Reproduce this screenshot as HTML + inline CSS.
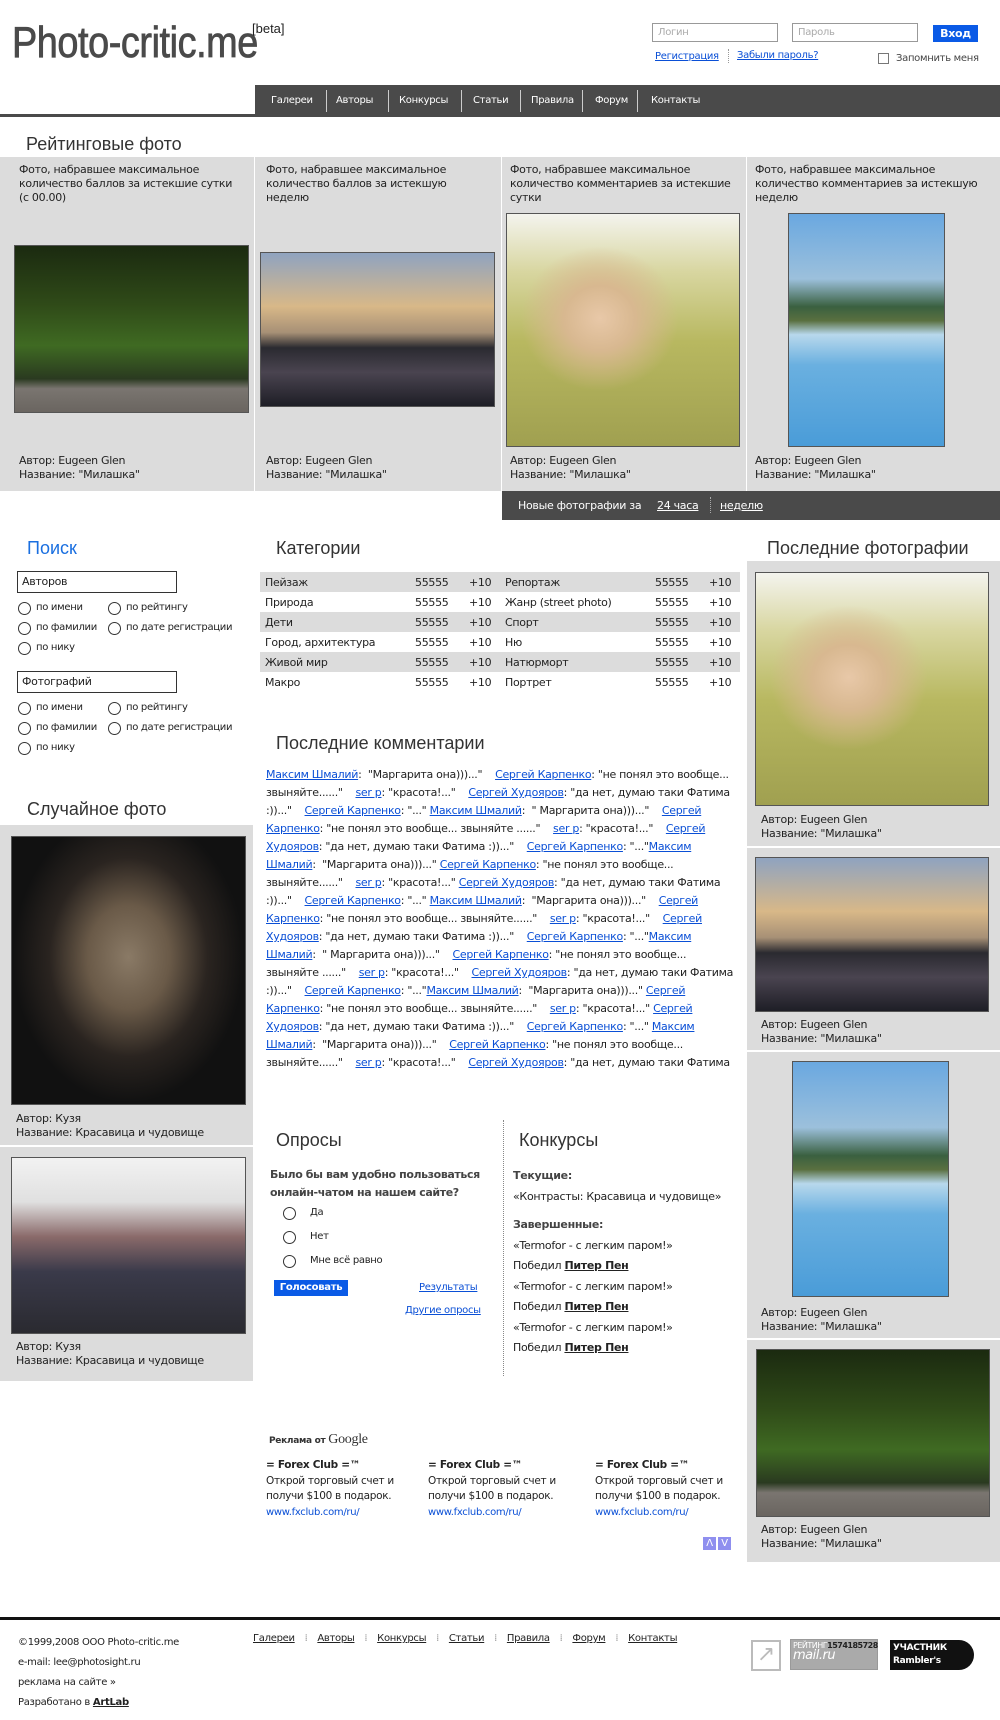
<!DOCTYPE html>
<html><head><meta charset="utf-8">
<style>
*{margin:0;padding:0;box-sizing:border-box}
body{width:1000px;height:1720px;position:relative;background:#fff;font-family:"DejaVu Sans","Liberation Sans",sans-serif;font-size:11px;letter-spacing:-0.3px;color:#222;overflow:hidden}
.a{position:absolute;white-space:nowrap}
a{color:#0a4fd6;text-decoration:underline}
.h{font-size:18px;color:#333;letter-spacing:0;font-family:"Liberation Sans",sans-serif}
.g{background:#dcdcdc}
.img{position:absolute;border:1px solid #555}
.nav span{position:absolute;top:0;color:#fff}
.sep{position:absolute;width:1px;background:#ddd}
.rad{position:absolute;width:13px;height:13px;border:1px solid #333;border-radius:50%;background:#fff}
.cat{position:absolute;left:260px;width:480px;height:20px}
.cat span{position:absolute;top:4px}
.cm{position:absolute;left:266px;top:766px;width:468px;height:306px;overflow:hidden;line-height:18px;font-size:11px;white-space:normal;letter-spacing:-0.3px}
.sm{font-size:10px}
</style></head><body>

<!-- header -->
<div class="a" style="left:12px;top:18px;font-size:44px;color:#4a4a4a;transform:scaleX(0.86);transform-origin:0 0;letter-spacing:-0.5px;font-family:'Liberation Sans',sans-serif;-webkit-text-stroke:0.8px #4a4a4a">Photo-critic.me</div>
<div class="a" style="left:252px;top:21px;font-size:13px;color:#222;font-family:'Liberation Sans',sans-serif;letter-spacing:0">[beta]</div>

<div class="a sm" style="left:652px;top:23px;width:126px;height:19px;border:1px solid #999;color:#aaa;padding:3px 5px">Логин</div>
<div class="a sm" style="left:792px;top:23px;width:126px;height:19px;border:1px solid #999;color:#aaa;padding:3px 5px">Пароль</div>
<div class="a" style="left:933px;top:25px;width:45px;height:17px;background:#0a5ae6;color:#fff;font-weight:bold;text-align:center;line-height:17px">Вход</div>
<a class="a sm" style="left:655px;top:51px">Регистрация</a>
<div class="a" style="left:728px;top:49px;height:14px;border-left:1px dotted #999"></div>
<a class="a sm" style="left:737px;top:50px">Забыли пароль?</a>
<div class="a" style="left:878px;top:53px;width:11px;height:11px;border:1px solid #777"></div>
<div class="a sm" style="left:896px;top:53px;color:#444">Запомнить меня</div>

<div class="a" style="left:0;top:114px;width:1000px;height:3px;background:#4a4a4a"></div>
<div class="a nav sm" style="left:255px;top:85px;width:745px;height:32px;background:#4a4a4a">
 <span style="left:16px;top:10px">Галереи</span>
 <div class="sep" style="left:71px;top:5px;height:22px;background:#ccc"></div>
 <span style="left:81px;top:10px">Авторы</span>
 <div class="sep" style="left:133px;top:5px;height:22px;background:#ccc"></div>
 <span style="left:144px;top:10px">Конкурсы</span>
 <div class="sep" style="left:206px;top:5px;height:22px;background:#ccc"></div>
 <span style="left:218px;top:10px">Статьи</span>
 <div class="sep" style="left:265px;top:5px;height:22px;background:#ccc"></div>
 <span style="left:276px;top:10px">Правила</span>
 <div class="sep" style="left:327px;top:5px;height:22px;background:#ccc"></div>
 <span style="left:340px;top:10px">Форум</span>
 <div class="sep" style="left:382px;top:5px;height:22px;background:#ccc"></div>
 <span style="left:396px;top:10px">Контакты</span>
</div>

<div class="a h" style="left:26px;top:134px">Рейтинговые фото</div>

<!-- rating panel -->
<div class="a g" style="left:0;top:157px;width:254px;height:334px"></div>
<div class="a g" style="left:255px;top:157px;width:246px;height:334px"></div>
<div class="a g" style="left:502px;top:157px;width:244px;height:334px"></div>
<div class="a g" style="left:747px;top:157px;width:253px;height:334px"></div>

<div class="a" style="left:19px;top:163px;line-height:14px">Фото, набравшее максимальное<br>количество баллов за истекшие сутки<br>(с 00.00)</div>
<div class="a" style="left:266px;top:163px;line-height:14px">Фото, набравшее максимальное<br>количество баллов за истекшую<br>неделю</div>
<div class="a" style="left:510px;top:163px;line-height:14px">Фото, набравшее максимальное<br>количество комментариев за истекшие<br>сутки</div>
<div class="a" style="left:755px;top:163px;line-height:14px">Фото, набравшее максимальное<br>количество комментариев за истекшую<br>неделю</div>

<div class="img" style="left:14px;top:245px;width:235px;height:168px;background:linear-gradient(180deg,#1b2a10 0%,#2f4a18 35%,#3f6a22 60%,#2a3a20 80%,#7a7570 86%,#6a6560 100%)"></div>
<div class="img" style="left:260px;top:252px;width:235px;height:155px;background:linear-gradient(180deg,#8fa3c0 0%,#d8b888 35%,#a79076 52%,#2a2a30 62%,#4a4450 78%,#1e1e26 100%)"></div>
<div class="img" style="left:506px;top:213px;width:234px;height:234px;background:radial-gradient(ellipse at 40% 45%,#e8c8a8 0%,#d8b890 18%,rgba(200,190,120,0) 40%),linear-gradient(180deg,#f4f4ee 0%,#d8d6a0 25%,#b8b860 55%,#a0a050 100%)"></div>
<div class="img" style="left:788px;top:213px;width:157px;height:234px;background:linear-gradient(180deg,#6aa8e0 0%,#9cc0dc 28%,#3a6040 40%,#5a7040 46%,#b8d8ec 52%,#6ab0e0 65%,#4a9cd8 100%)"></div>

<div class="a" style="left:19px;top:454px;line-height:14px">Автор: Eugeen Glen<br>Название: "Милашка"</div>
<div class="a" style="left:266px;top:454px;line-height:14px">Автор: Eugeen Glen<br>Название: "Милашка"</div>
<div class="a" style="left:510px;top:454px;line-height:14px">Автор: Eugeen Glen<br>Название: "Милашка"</div>
<div class="a" style="left:755px;top:454px;line-height:14px">Автор: Eugeen Glen<br>Название: "Милашка"</div>

<div class="a" style="left:502px;top:491px;width:498px;height:29px;background:#4a4a4a;color:#fff">
 <span class="a" style="left:16px;top:8px">Новые фотографии за</span>
 <a class="a" style="left:155px;top:8px;color:#fff">24 часа</a>
 <div class="a" style="left:208px;top:6px;height:16px;border-left:1px dotted #aaa"></div>
 <a class="a" style="left:218px;top:8px;color:#fff">неделю</a>
</div>

<!-- search -->
<div class="a h" style="left:27px;top:538px;color:#1a6fe0">Поиск</div>
<div class="a" style="left:17px;top:571px;width:160px;height:22px;border:1px solid #333;padding:3px 4px">Авторов</div>
<div class="rad" style="left:18px;top:602px"></div><div class="a sm" style="left:36px;top:602px">по имени</div>
<div class="rad" style="left:108px;top:602px"></div><div class="a sm" style="left:126px;top:602px">по рейтингу</div>
<div class="rad" style="left:18px;top:622px"></div><div class="a sm" style="left:36px;top:622px">по фамилии</div>
<div class="rad" style="left:108px;top:622px"></div><div class="a sm" style="left:126px;top:622px">по дате регистрации</div>
<div class="rad" style="left:18px;top:642px"></div><div class="a sm" style="left:36px;top:642px">по нику</div>
<div class="a" style="left:17px;top:671px;width:160px;height:22px;border:1px solid #333;padding:3px 4px">Фотографий</div>
<div class="rad" style="left:18px;top:702px"></div><div class="a sm" style="left:36px;top:702px">по имени</div>
<div class="rad" style="left:108px;top:702px"></div><div class="a sm" style="left:126px;top:702px">по рейтингу</div>
<div class="rad" style="left:18px;top:722px"></div><div class="a sm" style="left:36px;top:722px">по фамилии</div>
<div class="rad" style="left:108px;top:722px"></div><div class="a sm" style="left:126px;top:722px">по дате регистрации</div>
<div class="rad" style="left:18px;top:742px"></div><div class="a sm" style="left:36px;top:742px">по нику</div>

<!-- random photo -->
<div class="a h" style="left:27px;top:799px">Случайное фото</div>
<div class="a g" style="left:0;top:825px;width:253px;height:320px"></div>
<div class="a g" style="left:0;top:1147px;width:253px;height:234px"></div>
<div class="img" style="left:11px;top:836px;width:235px;height:269px;background:radial-gradient(ellipse at 50% 45%,#8a7a66 0%,#6a5a48 25%,#2a2420 48%,#111 70%),#111"></div>
<div class="a" style="left:16px;top:1112px;line-height:14px">Автор: Кузя<br>Название: Красавица и чудовище</div>
<div class="img" style="left:11px;top:1157px;width:235px;height:177px;background:linear-gradient(180deg,#f2f2f2 0%,#e0e0e0 25%,#8a6a6a 45%,#3a3a4a 65%,#2a2a30 100%)"></div>
<div class="a" style="left:16px;top:1340px;line-height:14px">Автор: Кузя<br>Название: Красавица и чудовище</div>

<!-- categories -->
<div class="a h" style="left:276px;top:538px">Категории</div>
<div class="cat g" style="top:572px"><span style="left:5px">Пейзаж</span><span style="left:155px">55555</span><span style="left:209px">+10</span><span style="left:245px">Репортаж</span><span style="left:395px">55555</span><span style="left:449px">+10</span></div>
<div class="cat" style="top:592px"><span style="left:5px">Природа</span><span style="left:155px">55555</span><span style="left:209px">+10</span><span style="left:245px">Жанр (street photo)</span><span style="left:395px">55555</span><span style="left:449px">+10</span></div>
<div class="cat g" style="top:612px"><span style="left:5px">Дети</span><span style="left:155px">55555</span><span style="left:209px">+10</span><span style="left:245px">Спорт</span><span style="left:395px">55555</span><span style="left:449px">+10</span></div>
<div class="cat" style="top:632px"><span style="left:5px">Город, архитектура</span><span style="left:155px">55555</span><span style="left:209px">+10</span><span style="left:245px">Ню</span><span style="left:395px">55555</span><span style="left:449px">+10</span></div>
<div class="cat g" style="top:652px"><span style="left:5px">Живой мир</span><span style="left:155px">55555</span><span style="left:209px">+10</span><span style="left:245px">Натюрморт</span><span style="left:395px">55555</span><span style="left:449px">+10</span></div>
<div class="cat" style="top:672px"><span style="left:5px">Макро</span><span style="left:155px">55555</span><span style="left:209px">+10</span><span style="left:245px">Портрет</span><span style="left:395px">55555</span><span style="left:449px">+10</span></div>

<div class="a h" style="left:276px;top:733px">Последние комментарии</div>
<div class="cm"><a>Максим Шмалий</a>: &nbsp;"Маргарита она)))..." &nbsp;&nbsp; <a>Сергей Карпенко</a>: "не понял это вообще... звыняйте......" &nbsp;&nbsp; <a>ser p</a>: "красота!..." &nbsp;&nbsp; <a>Сергей Худояров</a>: "да нет, думаю таки Фатима :))..." &nbsp;&nbsp; <a>Сергей Карпенко</a>: "..." <a>Максим Шмалий</a>: &nbsp;" Маргарита она)))..." &nbsp;&nbsp; <a>Сергей Карпенко</a>: "не понял это вообще... звыняйте ......" &nbsp;&nbsp; <a>ser p</a>: "красота!..." &nbsp;&nbsp; <a>Сергей Худояров</a>: "да нет, думаю таки Фатима :))..." &nbsp;&nbsp; <a>Сергей Карпенко</a>: "..."<a>Максим Шмалий</a>: &nbsp;"Маргарита она)))..." <a>Сергей Карпенко</a>: "не понял это вообще... звыняйте......" &nbsp;&nbsp; <a>ser p</a>: "красота!..." <a>Сергей Худояров</a>: "да нет, думаю таки Фатима :))..." &nbsp;&nbsp; <a>Сергей Карпенко</a>: "..." <a>Максим Шмалий</a>: &nbsp;"Маргарита она)))..." &nbsp;&nbsp; <a>Сергей Карпенко</a>: "не понял это вообще... звыняйте......" &nbsp;&nbsp; <a>ser p</a>: "красота!..." &nbsp;&nbsp; <a>Сергей Худояров</a>: "да нет, думаю таки Фатима :))..." &nbsp;&nbsp; <a>Сергей Карпенко</a>: "..."<a>Максим Шмалий</a>: &nbsp;" Маргарита она)))..." &nbsp;&nbsp; <a>Сергей Карпенко</a>: "не понял это вообще... звыняйте ......" &nbsp;&nbsp; <a>ser p</a>: "красота!..." &nbsp;&nbsp; <a>Сергей Худояров</a>: "да нет, думаю таки Фатима :))..." &nbsp;&nbsp; <a>Сергей Карпенко</a>: "..."<a>Максим Шмалий</a>: &nbsp;"Маргарита она)))..." <a>Сергей Карпенко</a>: "не понял это вообще... звыняйте......" &nbsp;&nbsp; <a>ser p</a>: "красота!..." <a>Сергей Худояров</a>: "да нет, думаю таки Фатима :))..." &nbsp;&nbsp; <a>Сергей Карпенко</a>: "..." <a>Максим Шмалий</a>: &nbsp;"Маргарита она)))..." &nbsp;&nbsp; <a>Сергей Карпенко</a>: "не понял это вообще... звыняйте......" &nbsp;&nbsp; <a>ser p</a>: "красота!..." &nbsp;&nbsp; <a>Сергей Худояров</a>: "да нет, думаю таки Фатима :))..."</div>

<!-- polls -->
<div class="a h" style="left:276px;top:1130px">Опросы</div>
<div class="a" style="left:503px;top:1120px;height:256px;border-left:1px dotted #888"></div>
<div class="a h" style="left:519px;top:1130px">Конкурсы</div>
<div class="a" style="left:270px;top:1166px;line-height:18px;font-weight:bold;color:#444;font-size:11px;letter-spacing:-0.4px">Было бы вам удобно пользоваться<br>онлайн-чатом на нашем сайте?</div>
<div class="rad" style="left:283px;top:1207px"></div><div class="a sm" style="left:310px;top:1207px">Да</div>
<div class="rad" style="left:283px;top:1231px"></div><div class="a sm" style="left:310px;top:1231px">Нет</div>
<div class="rad" style="left:283px;top:1255px"></div><div class="a sm" style="left:310px;top:1255px">Мне всё равно</div>
<div class="a" style="left:274px;top:1280px;width:74px;height:16px;background:#0a5ae6;color:#fff;font-weight:bold;text-align:center;line-height:16px;font-size:10px">Голосовать</div>
<a class="a sm" style="left:419px;top:1282px">Результаты</a>
<a class="a sm" style="left:405px;top:1305px">Другие опросы</a>

<div class="a" style="left:513px;top:1166px;line-height:20.5px">
<b style="color:#444">Текущие:</b><br>«Контрасты: Красавица и чудовище»<br><div style="height:8px"></div><b style="color:#444">Завершенные:</b><br>«Termofor - с легким паром!»<br>Победил <b><u>Питер Пен</u></b><br>«Termofor - с легким паром!»<br>Победил <b><u>Питер Пен</u></b><br>«Termofor - с легким паром!»<br>Победил <b><u>Питер Пен</u></b></div>

<!-- ads -->
<div class="a" style="left:269px;top:1432px;font-size:9px;font-weight:bold;color:#333">Реклама от <span style="font-family:'Liberation Serif',serif;font-size:14px;font-weight:normal">Google</span></div>
<div class="a" style="left:266px;top:1458px;line-height:15.5px;font-size:10.5px"><b>= Forex Club =™</b><br>Открой торговый счет и<br>получи $100 в подарок.<br><span style="color:#0a4fd6;font-size:10px">www.fxclub.com/ru/</span></div>
<div class="a" style="left:428px;top:1458px;line-height:15.5px;font-size:10.5px"><b>= Forex Club =™</b><br>Открой торговый счет и<br>получи $100 в подарок.<br><span style="color:#0a4fd6;font-size:10px">www.fxclub.com/ru/</span></div>
<div class="a" style="left:595px;top:1458px;line-height:15.5px;font-size:10.5px"><b>= Forex Club =™</b><br>Открой торговый счет и<br>получи $100 в подарок.<br><span style="color:#0a4fd6;font-size:10px">www.fxclub.com/ru/</span></div>
<div class="a" style="left:703px;top:1537px;width:13px;height:13px;background:#8f8fef;color:#fff;font-size:10px;text-align:center;line-height:13px">Λ</div>
<div class="a" style="left:718px;top:1537px;width:13px;height:13px;background:#8f8fef;color:#fff;font-size:10px;text-align:center;line-height:13px">V</div>

<!-- right column -->
<div class="a h" style="left:767px;top:538px">Последние фотографии</div>
<div class="a g" style="left:747px;top:561px;width:253px;height:285px"></div>
<div class="a g" style="left:747px;top:848px;width:253px;height:202px"></div>
<div class="a g" style="left:747px;top:1052px;width:253px;height:286px"></div>
<div class="a g" style="left:747px;top:1340px;width:253px;height:222px"></div>
<div class="img" style="left:755px;top:572px;width:234px;height:234px;background:radial-gradient(ellipse at 40% 45%,#e8c8a8 0%,#d8b890 18%,rgba(200,190,120,0) 40%),linear-gradient(180deg,#f4f4ee 0%,#d8d6a0 25%,#b8b860 55%,#a0a050 100%)"></div>
<div class="a" style="left:761px;top:813px;line-height:14px">Автор: Eugeen Glen<br>Название: "Милашка"</div>
<div class="img" style="left:755px;top:857px;width:234px;height:155px;background:linear-gradient(180deg,#8fa3c0 0%,#d8b888 35%,#a79076 52%,#2a2a30 62%,#4a4450 78%,#1e1e26 100%)"></div>
<div class="a" style="left:761px;top:1018px;line-height:14px">Автор: Eugeen Glen<br>Название: "Милашка"</div>
<div class="img" style="left:792px;top:1061px;width:157px;height:236px;background:linear-gradient(180deg,#6aa8e0 0%,#9cc0dc 28%,#3a6040 40%,#5a7040 46%,#b8d8ec 52%,#6ab0e0 65%,#4a9cd8 100%)"></div>
<div class="a" style="left:761px;top:1306px;line-height:14px">Автор: Eugeen Glen<br>Название: "Милашка"</div>
<div class="img" style="left:756px;top:1349px;width:234px;height:168px;background:linear-gradient(180deg,#1b2a10 0%,#2f4a18 35%,#3f6a22 60%,#2a3a20 80%,#7a7570 86%,#6a6560 100%)"></div>
<div class="a" style="left:761px;top:1523px;line-height:14px">Автор: Eugeen Glen<br>Название: "Милашка"</div>

<!-- footer -->
<div class="a" style="left:0;top:1617px;width:1000px;height:3px;background:#111"></div>
<div class="a sm" style="left:18px;top:1633px;line-height:20px">©1999,2008 ООО Photo-critic.me<br>e-mail: lee@photosight.ru<br>реклама на сайте »<br>Разработано в <b><u>ArtLab</u></b></div>
<div class="a sm" style="left:253px;top:1633px;color:#222">
<u>Галереи</u> <span style="color:#999;margin:0 7px">⁞</span> <u>Авторы</u> <span style="color:#999;margin:0 7px">⁞</span> <u>Конкурсы</u> <span style="color:#999;margin:0 7px">⁞</span> <u>Статьи</u> <span style="color:#999;margin:0 7px">⁞</span> <u>Правила</u> <span style="color:#999;margin:0 7px">⁞</span> <u>Форум</u> <span style="color:#999;margin:0 7px">⁞</span> <u>Контакты</u></div>
<div class="a" style="left:751px;top:1640px;width:30px;height:31px;border:2px solid #bbb;color:#bbb;font-size:22px;text-align:center;line-height:26px">↗</div>
<div class="a" style="left:790px;top:1639px;width:88px;height:31px;background:#aaa;border:1px solid #999;color:#fff;font-size:8px;line-height:10px;padding:1px 2px;letter-spacing:-0.5px">РЕЙТИНГ<b style="color:#222">1574185728</b><br><span style="font-size:13px;font-style:italic">mail.ru</span></div>
<div class="a" style="left:890px;top:1640px;width:84px;height:30px;background:#111;border-radius:0 15px 15px 0;color:#fff;font-size:9px;font-weight:bold;line-height:13px;padding:2px 3px">УЧАСТНИК<br>Rambler's</div>
</body></html>
